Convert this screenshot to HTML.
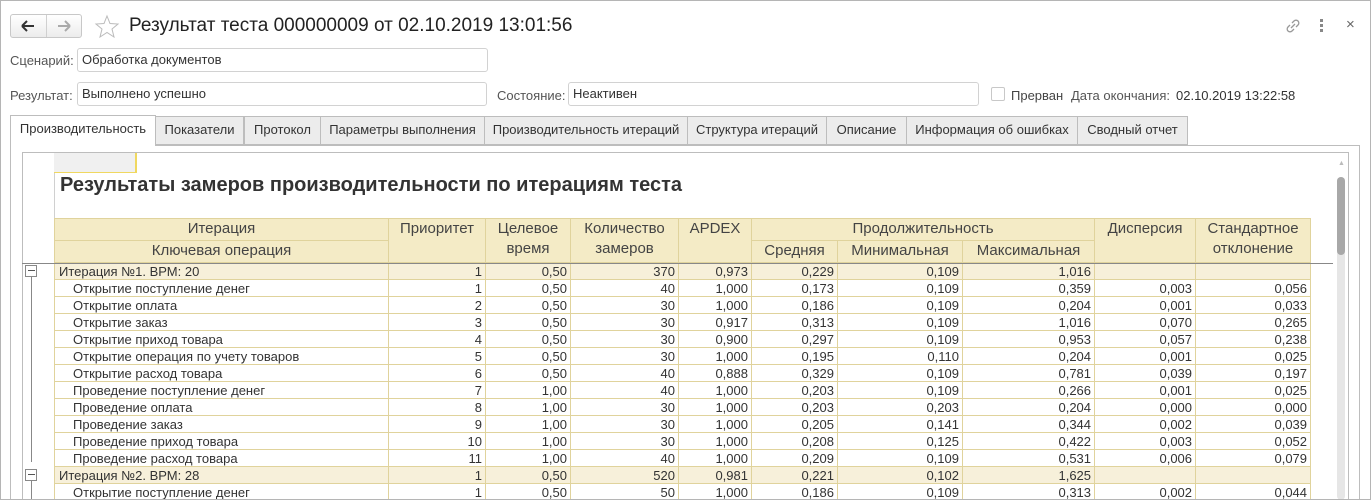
<!DOCTYPE html>
<html style="overflow:hidden;width:1371px;height:500px"><head><meta charset="utf-8"><style>
*{box-sizing:border-box;margin:0;padding:0}
body{width:1371px;height:500px;overflow:hidden;background:#fff;font-family:"Liberation Sans",sans-serif;color:#333;position:relative}
.abs{position:absolute}
.fld{position:absolute;height:24px;border:1px solid #d2d2d2;border-radius:3px;background:#fff;font-size:13px;line-height:22px;padding-left:4px;color:#333}
.lbl{position:absolute;font-size:13px;color:#555}
.tab{position:absolute;top:116px;height:29px;border:1px solid #bdbdbd;background:#ececec;font-size:13px;line-height:26px;text-align:center;color:#333}
table{position:absolute;left:54px;top:218px;border-collapse:collapse;table-layout:fixed;width:1256px;font-size:13px;color:#333}
td{border:1px solid #e0d39c;height:17px;line-height:15px;padding:0 3px;text-align:right;white-space:nowrap;overflow:hidden}
tr.r td{height:17px}
td.l{text-align:left;padding-left:4px}
td.s{padding-left:18px;text-align:left}
tr.it td{background:#f7f0da}
th{background:#f4ebc6;border:1px solid #e0d39c;font-weight:normal;font-size:15px;height:22px;line-height:20px;color:#444;vertical-align:top;padding:0 2px}
#clip{position:absolute;left:0;top:0;width:1371px;height:500px;overflow:hidden}
</style></head><body><div id="clip">
<div class="abs" style="left:0;top:0;width:1371px;height:500px;border:1px solid #b5b5b5"></div>
<div class="abs" style="left:10px;top:14px;width:72px;height:24px;border:1px solid #c8c8c8;border-radius:3px;background:linear-gradient(#fff,#ececec)"></div>
<div class="abs" style="left:46px;top:15px;width:1px;height:22px;background:#d0d0d0"></div>
<svg class="abs" style="left:20px;top:19px" width="16" height="14"><path d="M2 7H14M2 7L7 2M2 7L7 12" stroke="#333" stroke-width="2" fill="none"/></svg>
<svg class="abs" style="left:56px;top:19px" width="16" height="14"><path d="M2 7H14M14 7L9 2M14 7L9 12" stroke="#aaa" stroke-width="2" fill="none"/></svg>
<svg class="abs" style="left:94px;top:14px" width="26" height="24"><path d="M13 2L16 9.5L24 10L18 15L20 23L13 18.5L6 23L8 15L2 10L10 9.5Z" stroke="#bbb" fill="none"/></svg>
<div class="abs" style="left:129px;top:15px;font-size:19px;color:#222">Результат теста 000000009 от 02.10.2019 13:01:56</div>
<svg class="abs" style="left:1284px;top:17px" width="18" height="18"><path d="M7 11L11 7M6 8L4 10a2.5 2.5 0 0 0 4 4l2-2M12 10l2-2a2.5 2.5 0 0 0-4-4L8 6" stroke="#999" stroke-width="1.3" fill="none"/></svg>
<div class="abs" style="left:1320px;top:19px;width:3px;height:3px;background:#888;box-shadow:0 5px #888,0 10px #888"></div>
<div class="abs" style="left:1346px;top:16px;font-size:15px;color:#666">×</div>
<div class="lbl" style="left:10px;top:53px">Сценарий:</div>
<div class="fld" style="left:77px;top:48px;width:411px">Обработка документов</div>
<div class="lbl" style="left:10px;top:88px">Результат:</div>
<div class="fld" style="left:77px;top:82px;width:410px">Выполнено успешно</div>
<div class="lbl" style="left:497px;top:88px">Состояние:</div>
<div class="fld" style="left:568px;top:82px;width:411px">Неактивен</div>
<div class="abs" style="left:991px;top:87px;width:14px;height:14px;border:1px solid #c8c8c8;border-radius:2px"></div>
<div class="lbl" style="left:1011px;top:88px;color:#444">Прерван</div>
<div class="lbl" style="left:1071px;top:88px">Дата окончания:</div>
<div class="lbl" style="left:1176px;top:88px;color:#333">02.10.2019 13:22:58</div>
<div class="abs" style="left:10px;top:145px;width:1350px;height:360px;border:1px solid #bdbdbd"></div>
<div class="tab" style="left:155px;width:89px">Показатели</div>
<div class="tab" style="left:244px;width:77px">Протокол</div>
<div class="tab" style="left:320px;width:165px">Параметры выполнения</div>
<div class="tab" style="left:484px;width:204px">Производительность итераций</div>
<div class="tab" style="left:687px;width:140px">Структура итераций</div>
<div class="tab" style="left:826px;width:81px">Описание</div>
<div class="tab" style="left:906px;width:172px">Информация об ошибках</div>
<div class="tab" style="left:1077px;width:111px">Сводный отчет</div>
<div class="tab" style="left:10px;width:146px;height:31px;top:115px;background:#fff;border-bottom:none">Производительность</div>
<div class="abs" style="left:22px;top:152px;width:1327px;height:360px;border:1px solid #bdbdbd"></div>
<div class="abs" style="left:54px;top:153px;width:1px;height:347px;background:#d0d0d0"></div>
<div class="abs" style="left:54px;top:153px;width:83px;height:20px;background:#f0f0f0;border-right:2px solid #f0d860;border-bottom:1px solid #f0d860"></div>
<div class="abs" style="left:60px;top:174px;font-size:20px;font-weight:bold;color:#333">Результаты замеров производительности по итерациям теста</div>
<div class="abs" style="left:1337px;top:177px;width:8px;height:323px;background:#e6e6e6;border-radius:4px"></div>
<div class="abs" style="left:1337px;top:177px;width:8px;height:78px;background:#a8a8a8;border-radius:4px"></div>
<div class="abs" style="left:1338px;top:160px;font-size:7px;color:#bbb">▲</div>
<div class="abs" style="left:25px;top:265px;width:12px;height:12px;border:1px solid #888;background:#fff"></div>
<div class="abs" style="left:28px;top:270px;width:7px;height:1px;background:#555"></div>
<div class="abs" style="left:31px;top:277px;width:1px;height:185px;background:#888"></div>
<div class="abs" style="left:25px;top:469px;width:12px;height:12px;border:1px solid #888;background:#fff"></div>
<div class="abs" style="left:28px;top:474px;width:7px;height:1px;background:#555"></div>
<div class="abs" style="left:31px;top:481px;width:1px;height:20px;background:#888"></div>
<table>
<colgroup><col style="width:334px"><col style="width:97px"><col style="width:85px"><col style="width:108px"><col style="width:73px"><col style="width:86px"><col style="width:125px"><col style="width:132px"><col style="width:101px"><col style="width:115px"></colgroup>
<tr><th>Итерация</th><th rowspan="2">Приоритет</th><th rowspan="2">Целевое<br>время</th><th rowspan="2">Количество<br>замеров</th><th rowspan="2">APDEX</th><th colspan="3">Продолжительность</th><th rowspan="2">Дисперсия</th><th rowspan="2">Стандартное<br>отклонение</th></tr>
<tr><th>Ключевая операция</th><th>Средняя</th><th>Минимальная</th><th>Максимальная</th></tr>
<tr class="it"><td class="l">Итерация №1. ВРМ: 20</td><td>1</td><td>0,50</td><td>370</td><td>0,973</td><td>0,229</td><td>0,109</td><td>1,016</td><td></td><td></td></tr>
<tr><td class="s">Открытие поступление денег</td><td>1</td><td>0,50</td><td>40</td><td>1,000</td><td>0,173</td><td>0,109</td><td>0,359</td><td>0,003</td><td>0,056</td></tr>
<tr><td class="s">Открытие оплата</td><td>2</td><td>0,50</td><td>30</td><td>1,000</td><td>0,186</td><td>0,109</td><td>0,204</td><td>0,001</td><td>0,033</td></tr>
<tr><td class="s">Открытие заказ</td><td>3</td><td>0,50</td><td>30</td><td>0,917</td><td>0,313</td><td>0,109</td><td>1,016</td><td>0,070</td><td>0,265</td></tr>
<tr><td class="s">Открытие приход товара</td><td>4</td><td>0,50</td><td>30</td><td>0,900</td><td>0,297</td><td>0,109</td><td>0,953</td><td>0,057</td><td>0,238</td></tr>
<tr><td class="s">Открытие операция по учету товаров</td><td>5</td><td>0,50</td><td>30</td><td>1,000</td><td>0,195</td><td>0,110</td><td>0,204</td><td>0,001</td><td>0,025</td></tr>
<tr><td class="s">Открытие расход товара</td><td>6</td><td>0,50</td><td>40</td><td>0,888</td><td>0,329</td><td>0,109</td><td>0,781</td><td>0,039</td><td>0,197</td></tr>
<tr><td class="s">Проведение поступление денег</td><td>7</td><td>1,00</td><td>40</td><td>1,000</td><td>0,203</td><td>0,109</td><td>0,266</td><td>0,001</td><td>0,025</td></tr>
<tr><td class="s">Проведение оплата</td><td>8</td><td>1,00</td><td>30</td><td>1,000</td><td>0,203</td><td>0,203</td><td>0,204</td><td>0,000</td><td>0,000</td></tr>
<tr><td class="s">Проведение заказ</td><td>9</td><td>1,00</td><td>30</td><td>1,000</td><td>0,205</td><td>0,141</td><td>0,344</td><td>0,002</td><td>0,039</td></tr>
<tr><td class="s">Проведение приход товара</td><td>10</td><td>1,00</td><td>30</td><td>1,000</td><td>0,208</td><td>0,125</td><td>0,422</td><td>0,003</td><td>0,052</td></tr>
<tr><td class="s">Проведение расход товара</td><td>11</td><td>1,00</td><td>40</td><td>1,000</td><td>0,209</td><td>0,109</td><td>0,531</td><td>0,006</td><td>0,079</td></tr>
<tr class="it"><td class="l">Итерация №2. ВРМ: 28</td><td>1</td><td>0,50</td><td>520</td><td>0,981</td><td>0,221</td><td>0,102</td><td>1,625</td><td></td><td></td></tr>
<tr><td class="s">Открытие поступление денег</td><td>1</td><td>0,50</td><td>50</td><td>1,000</td><td>0,186</td><td>0,109</td><td>0,313</td><td>0,002</td><td>0,044</td></tr>
</table>
<div class="abs" style="left:22px;top:263px;width:1311px;height:1px;background:#888"></div>
<div class="abs" style="left:0;top:499px;width:1371px;height:1px;background:#b5b5b5"></div>
</div></body></html>
